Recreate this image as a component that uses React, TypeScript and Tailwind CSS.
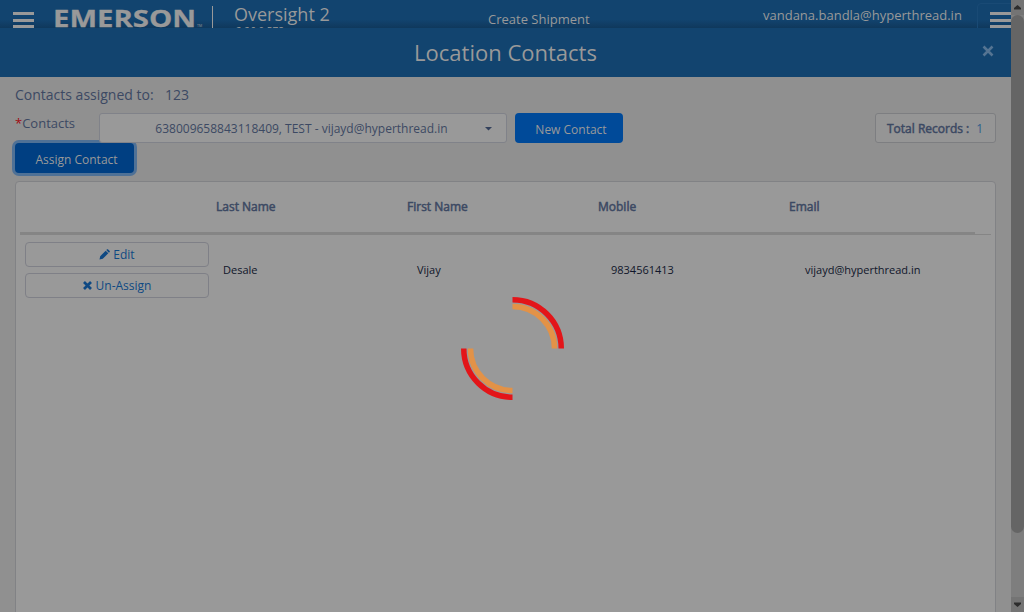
import React from 'react';

function Bars() {
  return (
    <div className="flex flex-col gap-[3.5px]">
      <div className="h-[3px] w-[21px] bg-[#999]" />
      <div className="h-[3px] w-[21px] bg-[#999]" />
      <div className="h-[3px] w-[21px] bg-[#999]" />
    </div>
  );
}

function TopBar() {
  return (
    <header className="flex h-7 shrink-0 items-start overflow-hidden bg-[#12446f] bg-linear-to-b from-[#12446f] from-70% to-[#0f385c] text-[#999]">
      <div className="ml-[13px] mt-3 w-[21px] shrink-0"><Bars /></div>
      <svg className="ml-5 shrink-0" width="150" height="28" viewBox="0 0 150 28">
        <text x="-1" y="27" textLength="143" lengthAdjust="spacingAndGlyphs" fontFamily="Open Sans, sans-serif" fontWeight="700" fontSize="23.5" fill="#999" stroke="#999" strokeWidth="0.300">EMERSON</text>
        <text x="143" y="27" fontFamily="Open Sans, sans-serif" fontSize="3.500" fill="#999">TM</text>
      </svg>
      <div className="ml-2 mt-1.5 h-6 w-px shrink-0 bg-[#999]" />
      <div className="ml-[21px] w-[254px] shrink-0">
        <div className="mt-[4px] text-[18px] leading-[20px]">Oversight 2</div>
        <div className="ml-[2px] text-[10px] leading-[14px]">2.26.0.578</div>
      </div>
      <div className="mt-[9px] w-[275px] shrink-0 text-[13px] leading-5">Create Shipment</div>
      <div className="w-[214px] shrink-0">
        <div className="mt-[5px] text-[13px] leading-5">vandana.bandla@hyperthread.in</div>
        <div className="ml-px text-[10px] leading-[14px]">Research Product Team</div>
      </div>
      <div className="mt-[3px] h-10 w-10 shrink-0 rounded border border-[#194a75] pl-3 pt-2"><Bars /></div>
    </header>
  );
}

function ScrollBar() {
  return (
    <div className="flex w-[13px] shrink-0 flex-col items-center bg-[#7e7e7e]">
      <div className="flex h-[15px] w-full items-center justify-center bg-[#747474]">
        <svg width="7" height="5" viewBox="0 0 7 5"><path d="M0 4.500V3L3.500 0 7 3v1.500z" fill="#2c2c2c" /></svg>
      </div>
      <div className="h-[518px] w-full rounded-full bg-[#656565]" />
      <div className="grow" />
      <div className="flex h-[15px] w-full items-center justify-center bg-[#747474]">
        <svg width="7" height="5" viewBox="0 0 7 5"><path d="M0 .5V2l3.500 3L7 2V.5z" fill="#2c2c2c" /></svg>
      </div>
    </div>
  );
}

function Spinner() {
  return (
    <svg className="absolute left-[461px] top-[297px]" width="103" height="103" viewBox="0 0 103 103" fill="none">
      <path d="M51.500 2.750A48.750 48.750 0 0 1 100.250 51.500M51.500 100.250A48.750 48.750 0 0 1 2.750 51.500" stroke="#e31519" strokeWidth="5.500" />
      <path d="M51.500 9.500A42 42 0 0 1 93.500 51.500M51.500 93.500A42 42 0 0 1 9.500 51.500" stroke="#e39247" strokeWidth="5.500" />
    </svg>
  );
}

const columns = ['Last Name', 'First Name', 'Mobile', 'Email'];
const row = ['Desale', 'Vijay', '9834561413', 'vijayd@hyperthread.in'];

export default function App() {
  return (
    <div className="relative flex h-[612px] w-[1024px] overflow-hidden bg-[#909090] font-['Open_Sans',sans-serif] whitespace-nowrap text-[#3c4963]">
      <div className="flex w-[1011px] shrink-0 flex-col">
        <TopBar />
        <div className="grid h-[49px] shrink-0 grid-cols-[1fr_auto_1fr] items-center bg-[#12446f] text-[#999]">
          <span />
          <h1 className="-mt-0.5 text-[22px] leading-8">Location Contacts</h1>
          <svg className="-mt-1 mr-[17px] justify-self-end" width="12" height="12" viewBox="0 0 12 12"><path d="M1.500 1.500l9 9M10.500 1.500l-9 9" stroke="#557492" strokeWidth="2.600" /></svg>
        </div>
        <main className="flex grow flex-col pl-[15px] pr-[15px]">
          <div className="mt-2 flex h-5 text-[14px] leading-5">
            <span className="w-[150px]">Contacts assigned to:</span><span>123</span>
          </div>
          <div className="mt-2 flex h-[30px] items-start">
            <div className="w-[84px] text-[13px] leading-5"><span className="text-[#a00b10]">*</span>Contacts</div>
            <div className="relative z-10 flex h-[30px] w-[408px] items-center rounded-[3px] border border-[#808289] bg-[#999] text-[12px]">
              <span className="grow pl-[18px] pt-0.5 text-center">638009658843118409, TEST - vijayd@hyperthread.in</span>
              <svg className="mr-[14px] mt-0.5" width="7" height="4" viewBox="0 0 7 4"><path d="M0 0h7L3.500 3.500z" fill="#33415c" /></svg>
            </div>
            <button className="ml-2 h-[30px] w-[108px] rounded-[4px] bg-[#004a99] pl-1 pt-[3px] text-[12px] text-[#999]">New Contact</button>
            <div className="ml-auto flex h-[30px] w-[121px] items-center rounded-[3px] border border-[#7d7e81] bg-[#959595] pl-[11px] pt-px text-[12px]">
              <span className="[-webkit-text-stroke:0.5px_currentColor]">Total Records :</span><span className="ml-[7px] text-[#2f5f8b]">1</span>
            </div>
          </div>
          <button className="h-[30px] w-[119px] rounded-[4px] bg-[#003f82] pl-1 pt-[3px] text-[12px] text-[#999] shadow-[0_0_0_3px_#4f7196]">Assign Contact</button>
          <section className="mt-2 h-[450px] rounded-t-[4px] border border-[#818285] bg-[#999] px-1">
            <div className="flex h-[53px] w-[955px] items-start border-b-[3px] border-[#858585] pl-[196px] pt-4 text-[12px] leading-[18px] [-webkit-text-stroke:0.5px_currentColor]">
              {columns.map((c) => <div className="w-[191px] shrink-0" key={c}>{c}</div>)}
            </div>
            <div className="-mt-px ml-auto h-px w-[16px] bg-[#858585]" />
            <div className="flex pl-[5px] pt-[7px]">
              <div className="flex w-[184px] shrink-0 flex-col gap-[6px] text-[12px] text-[#0f4983]">
                <button className="flex h-[25px] items-center justify-center gap-[3px] rounded-[4px] border border-[#7f8087]">
                  <svg width="11" height="11" viewBox="0 0 11 11" fill="currentColor"><path d="M.5 10.500L1.200 7.200 6.700 1.700l2.600 2.600-5.500 5.500zM7.300 1.100l.8-.8q.4-.3.800 0l1.800 1.800q.3.400 0 .8l-.8.800z" /></svg>
                  Edit
                </button>
                <button className="flex h-[25px] items-center justify-center gap-1 rounded-[4px] border border-[#7f8087]">
                  <svg width="9" height="9" viewBox="0 0 9 9"><path d="M1 1l7 7M8 1L1 8" stroke="currentColor" strokeWidth="2.700" /></svg>
                  Un-Assign
                </button>
              </div>
              <div className="ml-[14px] mt-5 flex text-[11px] leading-4 text-[#10162a]">
                {row.map((c, i) => <div className={i === 3 ? 'shrink-0' : 'w-[194px] shrink-0'} key={c}>{c}</div>)}
              </div>
            </div>
          </section>
        </main>
      </div>
      <ScrollBar />
      <Spinner />
    </div>
  );
}
